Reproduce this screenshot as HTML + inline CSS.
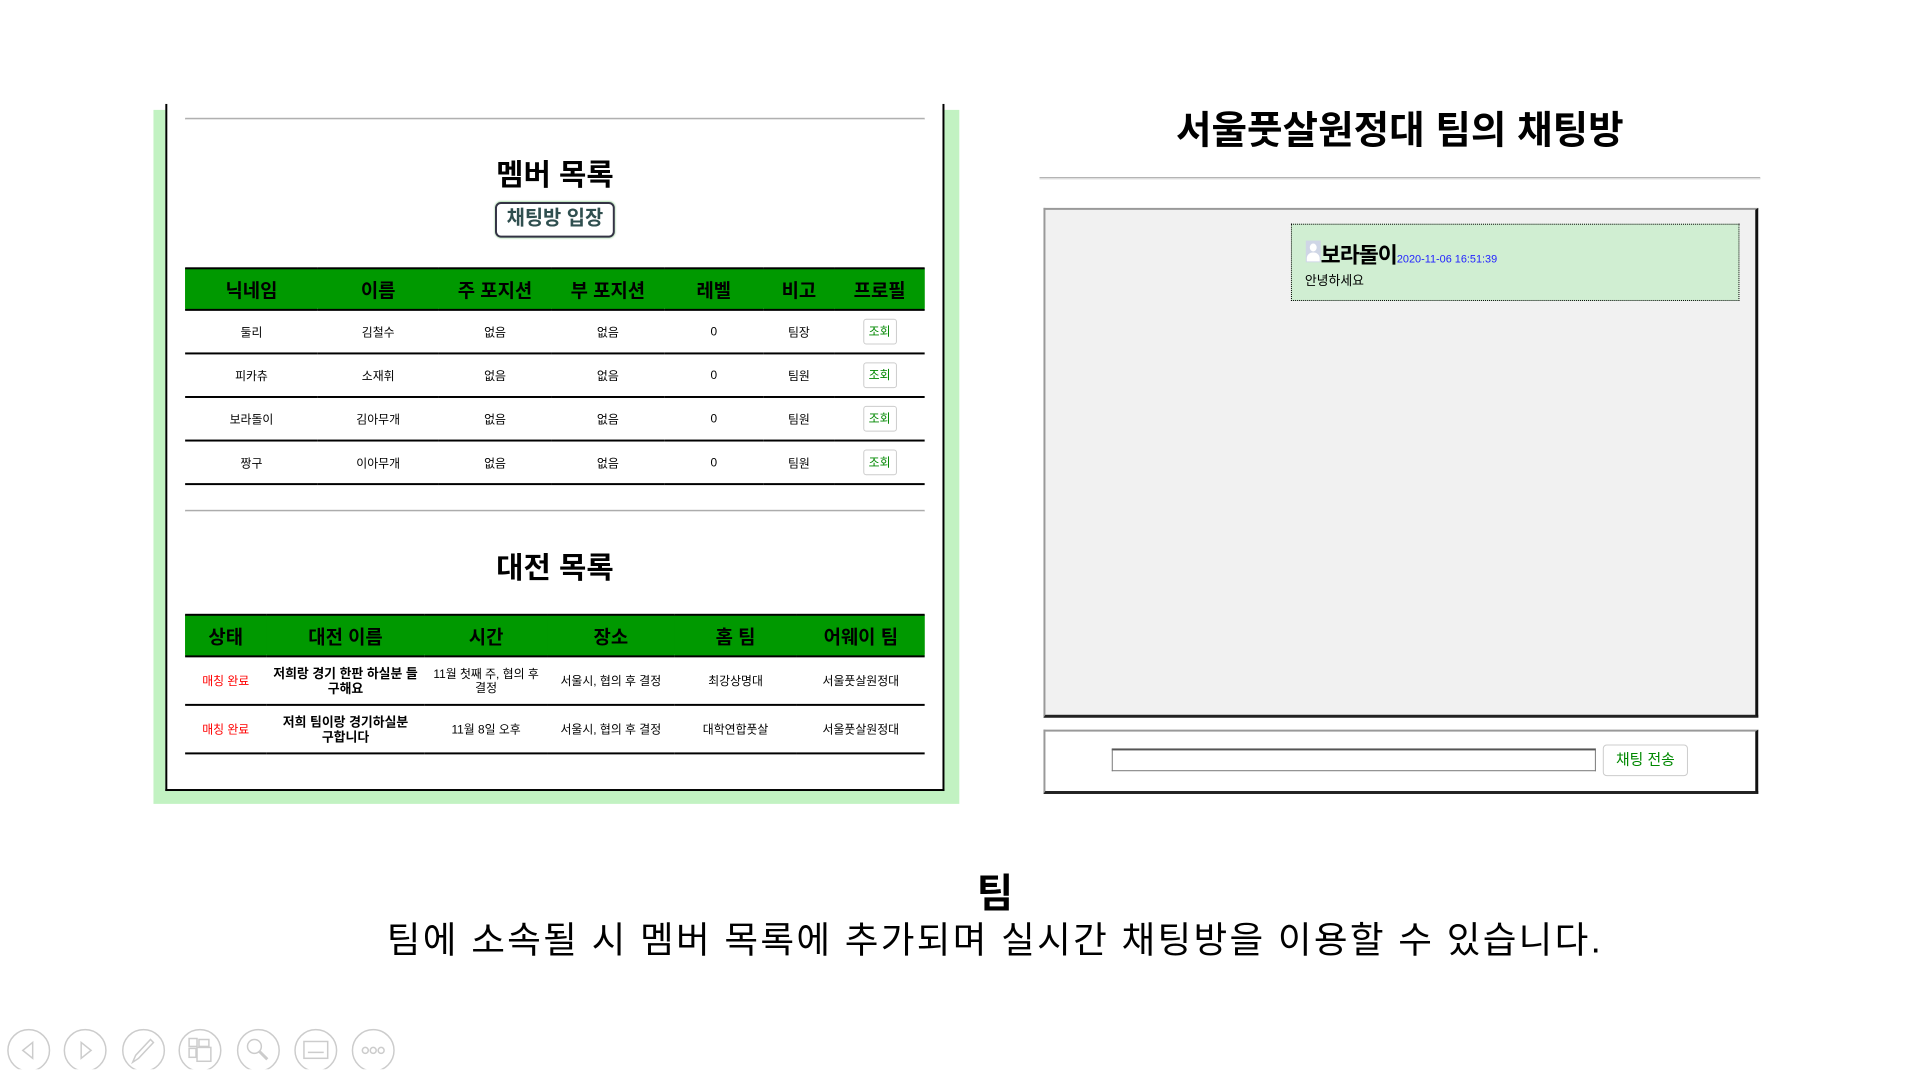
<!DOCTYPE html>
<html><head><meta charset="utf-8"><style>
*{margin:0;padding:0;box-sizing:border-box}
body{width:1920px;height:1080px;background:#fff;position:relative;overflow:hidden;font-family:"Liberation Sans","Noto Sans CJK KR",sans-serif;color:#000}
#w{position:absolute;left:0;top:0;width:1920px;height:1080px;transform:scale(0.99);transform-origin:0 0}
.a{position:absolute}
.hr{position:absolute;height:2px;background:#a0a0a0;border-bottom:1px solid #eee}
table{border-collapse:collapse;position:absolute;table-layout:fixed}
tr.h{background:#009900}
th{font-size:19px;font-weight:bold;text-align:center;border-top:2px solid #000;border-bottom:2px solid #000}
td{text-align:center;font-size:12px;border-bottom:2px solid #000;word-break:keep-all;padding:0 3px}
.btn{display:inline-block;border:1px solid #ccc;border-radius:3px;color:#080;font-size:12px;width:34px;height:26px;line-height:24px;background:#fff}
.c{text-align:center}
</style></head><body><div id="w">
<div class="a" style="left:155px;top:111px;width:814px;height:701px;background:#c2f2c2"></div>
<div class="a" style="left:167px;top:105px;width:787px;height:694px;background:#fff;border:2px solid #000;border-top:none"></div>
<div class="hr" style="left:187px;top:119px;width:747px"></div>
<div class="a c" style="left:187px;top:152px;width:747px;font-size:30px;font-weight:bold">멤버 목록</div>
<div class="a c" style="left:500px;top:204px;width:121px;height:36px;border:2px solid #334;border-radius:6px;font-size:20px;font-weight:bold;color:#2f4f4f;line-height:30px;box-shadow:0 0 2px #8c8">채팅방 입장</div>
<div class="a" style="left:187px;top:271px;width:747px;height:40px;background:#009900"></div>
<table style="left:187px;top:270px;width:747px">
<colgroup><col style="width:134px"><col style="width:122px"><col style="width:114px"><col style="width:114px"><col style="width:100px"><col style="width:72px"><col style="width:91px"></colgroup>
<tr class="h" style="height:42px"><th>닉네임</th><th>이름</th><th>주 포지션</th><th>부 포지션</th><th>레벨</th><th>비고</th><th>프로필</th></tr>
<tr style="height:44px"><td>둘리</td><td>김철수</td><td>없음</td><td>없음</td><td>0</td><td>팀장</td><td><span class="btn">조회</span></td></tr>
<tr style="height:44px"><td>피카츄</td><td>소재휘</td><td>없음</td><td>없음</td><td>0</td><td>팀원</td><td><span class="btn">조회</span></td></tr>
<tr style="height:44px"><td>보라돌이</td><td>김아무개</td><td>없음</td><td>없음</td><td>0</td><td>팀원</td><td><span class="btn">조회</span></td></tr>
<tr style="height:44px"><td>짱구</td><td>이아무개</td><td>없음</td><td>없음</td><td>0</td><td>팀원</td><td><span class="btn">조회</span></td></tr>
</table>
<div class="hr" style="left:187px;top:515px;width:747px"></div>
<div class="a c" style="left:187px;top:549px;width:747px;font-size:30px;font-weight:bold">대전 목록</div>
<div class="a" style="left:187px;top:621px;width:747px;height:40px;background:#009900"></div>
<table style="left:187px;top:620px;width:747px">
<colgroup><col style="width:82px"><col style="width:160px"><col style="width:124px"><col style="width:128px"><col style="width:124px"><col style="width:129px"></colgroup>
<tr class="h" style="height:42px"><th>상태</th><th>대전 이름</th><th>시간</th><th>장소</th><th>홈 팀</th><th>어웨이 팀</th></tr>
<tr style="height:49px"><td style="color:#f00">매칭 완료</td><td style="font-size:13px;line-height:15px;font-weight:bold">저희랑 경기 한판 하실분 들 구해요</td><td style="line-height:14px">11월 첫째 주, 협의 후 결정</td><td>서울시, 협의 후 결정</td><td>최강상명대</td><td>서울풋살원정대</td></tr>
<tr style="height:49px"><td style="color:#f00">매칭 완료</td><td style="font-size:13px;line-height:15px;font-weight:bold">저희 팀이랑 경기하실분 구합니다</td><td>11월 8일 오후</td><td>서울시, 협의 후 결정</td><td>대학연합풋살</td><td>서울풋살원정대</td></tr>
</table>

<div class="a c" style="left:1050px;top:101px;width:728px;font-size:39px;font-weight:bold">서울풋살원정대 팀의 채팅방</div>
<div class="hr" style="left:1050px;top:179px;width:728px"></div>
<div class="a" style="left:1054px;top:210px;width:722px;height:515px;background:#f1f1f1;border:2px solid #999;border-right:3px solid #111;border-bottom:3px solid #222"></div>
<div class="a" style="left:1304px;top:226px;width:453px;height:78px;background:#d0eed2;border:1px dotted #000"></div>
<div class="a" style="left:1319px;top:243px;width:15px;height:22px;background:#cfd6e6"><div style="margin:3px auto 0;width:7px;height:8px;border-radius:50%;background:#fff"></div><div style="margin:1px auto 0;width:13px;height:9px;border-radius:6px 6px 0 0;background:#fff"></div></div>
<div class="a" style="left:1334px;top:240px;font-size:22px;font-weight:bold;letter-spacing:-1px">보라돌이<span style="font-size:11px;font-weight:normal;color:#22f;letter-spacing:0">2020-11-06 16:51:39</span></div>
<div class="a" style="left:1318px;top:273px;font-size:13px">안녕하세요</div>
<div class="a" style="left:1054px;top:737px;width:722px;height:65px;background:#fff;border:2px solid #999;border-right:3px solid #111;border-bottom:3px solid #222"></div>
<div class="a" style="left:1123px;top:756px;width:489px;height:23px;border:1px solid #777;border-top:2px solid #555"></div>
<div class="a c" style="left:1619px;top:752px;width:86px;height:32px;border:1px solid #ccc;border-radius:4px;color:#080;font-size:15px;line-height:30px">채팅 전송</div>

<div class="a c" style="left:0;top:870px;width:2010px;font-size:40px;font-weight:bold">팀</div>
<div class="a c" style="left:0;top:919px;width:2010px;font-size:37px;letter-spacing:2.3px">팀에 소속될 시 멤버 목록에 추가되며 실시간 채팅방을 이용할 수 있습니다.</div>

<svg class="a" style="left:0;top:1026px" width="420" height="54" fill="none" stroke="#ccc" stroke-width="1.5">
<circle cx="29" cy="35" r="21"/><circle cx="86" cy="35" r="21"/><circle cx="145" cy="35" r="21"/><circle cx="202" cy="35" r="21"/><circle cx="261" cy="35" r="21"/><circle cx="319" cy="35" r="21"/><circle cx="377" cy="35" r="21"/>
<path d="M33 27 L23 35 L33 43 Z"/><path d="M82 27 L92 35 L82 43 Z"/>
<path d="M134 47 L137 40 L152 24 L155 27 L140 43 Z"/>
<rect x="191" y="23" width="8" height="8"/><rect x="201" y="24" width="10" height="7"/><rect x="191" y="33" width="7" height="9"/><rect x="199" y="32" width="14" height="14"/>
<circle cx="257" cy="31" r="7"/><path d="M262 36 L270 44" stroke-width="3"/>
<rect x="307" y="26" width="24" height="17"/><path d="M311 37 H327"/>
<circle cx="369" cy="35" r="3"/><circle cx="377" cy="35" r="3"/><circle cx="385" cy="35" r="3"/>
</svg>
</div></body></html>
